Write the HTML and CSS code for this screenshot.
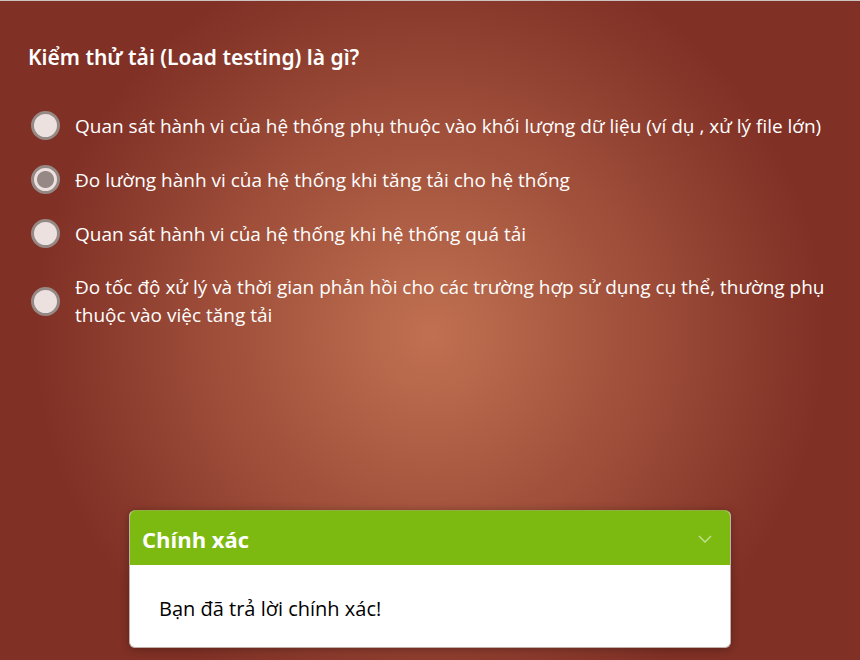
FILE: index.html
```html
<!DOCTYPE html>
<html lang="vi">
<head>
<meta charset="utf-8">
<meta name="viewport" content="width=device-width, initial-scale=1">
<title>Kiểm thử tải</title>
<link rel="stylesheet" href="styles.css">
</head>
<body>
<main class="slide">
  <fieldset class="question">
    <legend class="question-title">Kiểm thử tải (Load testing) là gì?</legend>
    <div class="options">
      <label class="option"><input class="radio" type="radio" name="answer"><span>Quan sát hành vi của hệ thống phụ thuộc vào khối lượng dữ liệu (ví dụ , xử lý file lớn)</span></label>
      <label class="option"><input class="radio" type="radio" name="answer" checked><span>Đo lường hành vi của hệ thống khi tăng tải cho hệ thống</span></label>
      <label class="option"><input class="radio" type="radio" name="answer"><span>Quan sát hành vi của hệ thống khi hệ thống quá tải</span></label>
      <label class="option"><input class="radio" type="radio" name="answer"><span>Đo tốc độ xử lý và thời gian phản hồi cho các trường hợp sử dụng cụ thể, thường phụ thuộc vào việc tăng tải</span></label>
    </div>
  </fieldset>
  <section class="feedback">
    <header class="feedback-header">
      <h2 class="feedback-title">Chính xác</h2>
      <button class="collapse" type="button" aria-label="Thu gọn">
        <svg width="14" height="8" viewBox="0 0 14 8" fill="none" stroke="currentColor" stroke-width="1.3"><path d="M1 1l6 6 6-6"/></svg>
      </button>
    </header>
    <p class="feedback-text">Bạn đã trả lời chính xác!</p>
  </section>
</main>
</body>
</html>
```
FILE: styles.css
```css
* {
  box-sizing: border-box;
}

body {
  margin: 0;
  font-family: "Open Sans", "Noto Sans", sans-serif;
}

.slide {
  display: flex;
  flex-direction: column;
  justify-content: space-between;
  min-height: 100vh;
  padding: 40px 20px 12px 28px;
  border-top: 1px solid #cbc4c0;
  background: radial-gradient(circle 396px at 50% 334px, #c17151, #803025);
  color: #fff;
}

.question {
  min-width: 0;
  margin: 0;
  padding: 0;
  border: 0;
}

.question-title {
  padding: 0;
  font-family: "Noto Sans", "Open Sans", sans-serif;
  font-size: 21px;
  font-weight: 600;
  line-height: 32px;
}

.options {
  display: flex;
  flex-direction: column;
  gap: 25px;
  padding: 38px 0 0 3px;
}

.option {
  display: flex;
  align-items: center;
  gap: 15px;
  font-size: 19px;
  line-height: 28px;
}

.radio {
  flex: none;
  appearance: none;
  width: 29px;
  height: 29px;
  margin: 0;
  border: 3px solid #968985;
  border-radius: 50%;
  background: #ede1df;
}

.radio:checked {
  background: radial-gradient(circle, #968985 8px, #ede1df 9px);
  background-origin: border-box;
}

.feedback {
  align-self: center;
  width: 100%;
  max-width: 602px;
  margin-right: 8px;
  overflow: hidden;
  border: 1px solid #c4b0aa;
  border-top-color: #8fb03c;
  border-radius: 6px;
  background: #fff;
  box-shadow: 0 1px 8px rgba(0, 0, 0, 0.3);
  color: #000;
}

.feedback-header {
  display: flex;
  align-items: center;
  justify-content: space-between;
  padding: 12px 18px 10px 12px;
  background: #7cba11;
  color: #fff;
}

.feedback-title {
  margin: 0;
  font-size: 22px;
  font-weight: 700;
  line-height: 32px;
}

.collapse {
  display: flex;
  padding: 0;
  border: 0;
  background: none;
  color: #c5e296;
}

.feedback-text {
  margin: 0;
  padding: 28px 29px 22px;
  font-size: 20px;
  line-height: 32px;
}
```
